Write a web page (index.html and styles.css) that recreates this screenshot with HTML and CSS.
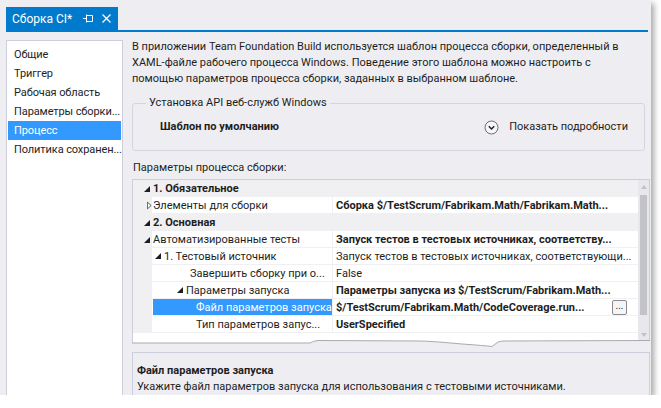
FILE: index.html
```html
<!DOCTYPE html>
<html>
<head>
    <meta charset="UTF-8">
    <title>Сборка CI*</title>
    <link rel="stylesheet" href="styles.css">
</head>
<body>

<div class="window">
    <div class="tabstrip">
        <div class="tab">
            <span class="tab-title">Сборка CI*</span>
            <svg class="pin" width="11" height="9" viewBox="0 0 11 9">
                <path d="M0 4.5H3.5M3.5 0.5V8.5M3.5 1.5H9.5V7.5H3.5" fill="none" stroke="#fff" stroke-width="1"/>
            </svg>
            <svg class="close" width="9" height="9" viewBox="0 0 9 9">
                <path d="M0.5 0.5L8.5 8.5M8.5 0.5L0.5 8.5" fill="none" stroke="#fff" stroke-width="1.3"/>
            </svg>
        </div>
    </div>

    <div class="body">
        <ul class="nav">
            <li>Общие</li>
            <li>Триггер</li>
            <li>Рабочая область</li>
            <li>Параметры сборки...</li>
            <li class="active">Процесс</li>
            <li>Политика сохранен...</li>
        </ul>

        <div class="main">
            <p class="intro">В приложении Team Foundation Build используется шаблон процесса сборки, определенный в XAML-файле рабочего процесса Windows. Поведение этого шаблона можно настроить с помощью параметров процесса сборки, заданных в выбранном шаблоне.</p>

            <fieldset class="api">
                <legend>Установка API веб-служб Windows</legend>
                <div class="api-row">
                    <b>Шаблон по умолчанию</b>
                    <span class="details">
                        <svg width="15" height="15" viewBox="0 0 15 15">
                            <circle cx="7.5" cy="7.5" r="6.5" fill="#f7f7f9" stroke="#6d6d72" stroke-width="1"/>
                            <path d="M4.8 6.3L7.5 9L10.2 6.3" fill="none" stroke="#1e1e1e" stroke-width="1.4"/>
                        </svg>
                        Показать подробности
                    </span>
                </div>
            </fieldset>

            <div class="grid-title">Параметры процесса сборки:</div>

            <div class="grid">
                <div class="rows">
                    <div class="row cat">
                        <span class="margin"><i class="exp"></i></span>
                        <span class="cat-name">1. Обязательное</span>
                    </div>
                    <div class="row">
                        <span class="margin">
                            <svg class="col" width="6" height="9" viewBox="0 0 6 9">
                                <path d="M0.5 0.5L5 4.5L0.5 8.5Z" fill="#fff" stroke="#444" stroke-width="1"/>
                            </svg>
                        </span>
                        <span class="label lv1">Элементы для сборки</span>
                        <span class="value bold">Сборка $/TestScrum/Fabrikam.Math/Fabrikam.Math...</span>
                    </div>
                    <div class="row cat">
                        <span class="margin"><i class="exp"></i></span>
                        <span class="cat-name">2. Основная</span>
                    </div>
                    <div class="row">
                        <span class="margin"><i class="exp"></i></span>
                        <span class="label lv1">Автоматизированные тесты</span>
                        <span class="value bold">Запуск тестов в тестовых источниках, соответству...</span>
                    </div>
                    <div class="row">
                        <span class="margin"></span>
                        <span class="label lv2"><i class="exp"></i>1. Тестовый источник</span>
                        <span class="value">Запуск тестов в тестовых источниках, соответствующи...</span>
                    </div>
                    <div class="row">
                        <span class="margin"></span>
                        <span class="label lv3">Завершить сборку при о...</span>
                        <span class="value">False</span>
                    </div>
                    <div class="row">
                        <span class="margin"></span>
                        <span class="label lv3x"><i class="exp"></i>Параметры запуска</span>
                        <span class="value bold">Параметры запуска из $/TestScrum/Fabrikam.Math...</span>
                    </div>
                    <div class="row selected">
                        <span class="margin"></span>
                        <span class="label lv4">Файл параметров запуска</span>
                        <span class="value bold">
                            <span>$/TestScrum/Fabrikam.Math/CodeCoverage.run...</span>
                            <span class="browse">...</span>
                        </span>
                    </div>
                    <div class="row">
                        <span class="margin"></span>
                        <span class="label lv4">Тип параметров запус...</span>
                        <span class="value bold">UserSpecified</span>
                    </div>
                </div>
                <div class="scrollbar">
                    <span class="arrow up"></span>
                    <span class="thumb"></span>
                    <span class="arrow down"></span>
                </div>
            </div>

            <!-- torn edge of the grid -->
            <svg class="tear" width="518" height="10" viewBox="0 0 518 10">
                <defs>
                    <clipPath id="torn">
                        <path d="M0 0H518V1.5L372 2Q368 2.2 366 3L360 7.5Q352 6.5 330 5Q300 2.2 288 2L186 1.5Q181 2 178 4L0 4Z"/>
                    </clipPath>
                </defs>
                <path d="M0 0H518V1.5L372 2Q368 2.2 366 3L360 7.5Q352 6.5 330 5Q300 2.2 288 2L186 1.5Q181 2 178 4L0 4Z" fill="#fff"/>
                <rect x="506" y="0" width="11" height="10" fill="#e8e8ec" clip-path="url(#torn)"/>
                <path d="M0.5 0V4M517.5 0V1.5" stroke="#cccedb" stroke-width="1"/>
                <path d="M0 4L178 4Q181 2 186 1.5L288 2Q300 2.2 330 5Q352 6.5 360 7.5L366 3Q368 2.2 372 2L518 1.5" fill="none" stroke="#a9a9b0" stroke-width="1"/>
            </svg>

            <div class="help">
                <b>Файл параметров запуска</b>
                <div>Укажите файл параметров запуска для использования с тестовыми источниками.</div>
            </div>
        </div>
    </div>
</div>

</body>
</html>
```

FILE: styles.css
```css
html {
    box-sizing: border-box;
}
*, *:before, *:after {
    box-sizing: inherit;
}

body{
    margin: 0;
    background-color: #ffffff;
    font-family: Roboto, "Liberation Sans", sans-serif;
    font-size: 11px;
    line-height: 16px;
    color: #1e1e1e;
}

.window{
    width: 651px;
    height: 395px;
    background-color: #eeeef2;
    box-shadow: 3px 3px 6px rgba(0, 0, 0, 0.35);
    overflow: hidden;
}

/* document tab */

.tabstrip{
    margin-left: 6px;
    margin-right: 3px;
    padding-top: 7px;
    border-bottom: 2px solid #007acc;
}

.tab{
    display: flex;
    align-items: center;
    width: 112px;
    height: 23px;
    padding-left: 6px;
    background-color: #007acc;
    color: #ffffff;
    font-size: 12px;
}

.tab-title{
    width: 71px;
}

.tab .close{
    margin-left: 8px;
}

/* body */

.body{
    display: flex;
    height: 363px;
}

.nav{
    list-style: none;
    margin: 8px 0 0 6px;
    padding: 4px 1px;
    width: 117px;
    background-color: #ffffff;
    border: 1px solid #cccedb;
    border-bottom: none;
}

.nav li{
    height: 19px;
    line-height: 19px;
    padding-left: 6px;
    white-space: nowrap;
    letter-spacing: -0.1px;
}

.nav li.active{
    background-color: #3399ff;
    color: #ffffff;
}

.main{
    margin-left: 7px;
    padding-top: 7px;
    width: 520px;
}

.intro{
    margin: 0;
    padding-left: 2px;
    width: 500px;
}

/* API group */

.api{
    margin: 8px 0 0 2px;
    padding: 0 16px 0 13px;
    width: 513px;
    height: 56px;
    border: 1px solid #d3d6df;
    border-radius: 3px;
}

.api legend{
    padding: 0 3px;
}

.api-row{
    display: flex;
    justify-content: space-between;
    align-items: center;
    padding: 8px 0 0 14px;
}

.details{
    display: flex;
    align-items: center;
    gap: 10px;
}

.grid-title{
    margin-top: 9px;
    padding-left: 3px;
}

/* property grid */

.grid{
    display: flex;
    margin: 3px 0 0 2px;
    width: 518px;
    height: 160px;
    background-color: #ffffff;
    border: 1px solid #cccedb;
    border-bottom: none;
}

.rows{
    flex: 1;
    min-width: 0;
}

.row{
    display: grid;
    grid-template-columns: 19px 180px minmax(0, 1fr);
    height: 17px;
    line-height: 17px;
    white-space: nowrap;
}

.row .margin{
    background-color: #f0f0f2;
    display: flex;
    align-items: center;
}

.row.cat{
    background-color: #f0f0f2;
    font-weight: bold;
}

.cat-name{
    grid-column: 2 / 4;
    padding-left: 1px;
}

.label{
    display: flex;
    align-items: center;
    overflow: hidden;
    border-bottom: 1px solid #f0f0f2;
}

.label.lv1{ padding-left: 1px; }
.label.lv2{ padding-left: 3px; }
.label.lv3{ padding-left: 38px; }
.label.lv3x{ padding-left: 25px; }
.label.lv4{ padding-left: 44px; }

.value{
    display: flex;
    align-items: center;
    justify-content: space-between;
    padding-left: 3px;
    padding-right: 11px;
    overflow: hidden;
    border-left: 1px solid #f0f0f2;
    border-bottom: 1px solid #f0f0f2;
}

.bold{
    font-weight: bold;
}

.row.selected .label{
    margin-left: 1px;
    background-color: #3399ff;
    color: #ffffff;
    padding-left: 43px;
}

.browse{
    width: 15px;
    height: 15px;
    line-height: 9px;
    text-align: center;
    font-weight: normal;
    font-size: 10px;
    border: 1px solid #8a8a92;
    border-radius: 2px;
    background-color: #f5f5f7;
}

/* expanders */

.exp{
    display: inline-block;
    width: 0;
    height: 0;
    border-left: 6px solid transparent;
    border-bottom: 6px solid #1e1e1e;
    margin-right: 3px;
}

.row .margin .exp{
    margin-left: 11px;
}

.col{
    margin-left: 14px;
}

/* scrollbar */

.scrollbar{
    display: flex;
    flex-direction: column;
    align-items: center;
    width: 11px;
    background-color: #e8e8ec;
}

.arrow{
    width: 0;
    height: 0;
    border-left: 3px solid transparent;
    border-right: 3px solid transparent;
}

.arrow.up{
    margin: 5px 0 6px 0;
    border-bottom: 4px solid #c2c3c9;
}

.arrow.down{
    margin-top: auto;
    margin-bottom: 2px;
    border-top: 4px solid #c2c3c9;
}

.thumb{
    width: 7px;
    height: 120px;
    background-color: #c2c3c9;
}

.tear{
    display: block;
    margin-left: 2px;
}

/* description */

.help{
    margin: 3px 0 0 2px;
    width: 518px;
    height: 44px;
    padding: 10px 4px 0 4px;
    border: 1px solid #cccedb;
    border-bottom: none;
}
```
